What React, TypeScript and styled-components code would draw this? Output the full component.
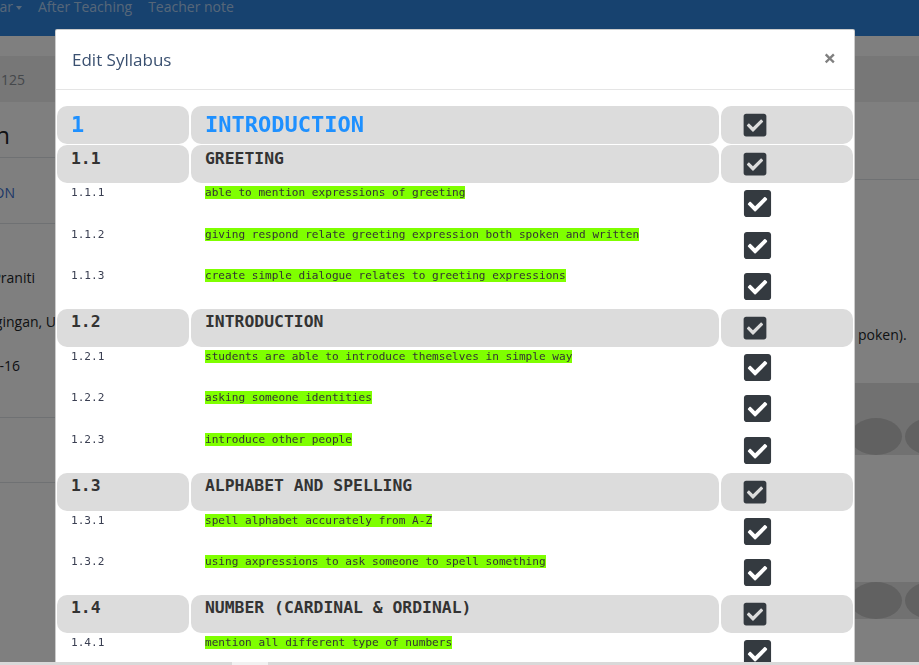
import React from 'react';
import styled, { createGlobalStyle, css } from 'styled-components';
import { FaCheckSquare } from 'react-icons/fa';

const GlobalStyle = createGlobalStyle`
  html, body { margin: 0; padding: 0; height: 100%; overflow: hidden; background: #fff; }
  body { font-family: "Open Sans", "Liberation Sans", sans-serif; color: #212529; }
  * { box-sizing: border-box; }
`;

/* ---------- background page ---------- */
const Page = styled.div`
  width: 100%;
  height: 665px;
  overflow: hidden;
  background: #fff;
`;

const NavBar = styled.nav`
  height: 36px;
  background: #2e84de;
  display: flex;
  align-items: flex-start;
`;

const NavClip = styled.div`
  width: 30px;
  flex-shrink: 0;
  overflow: hidden;
  display: flex;
  justify-content: flex-end;
`;

const NavLink = styled.span<{ $dropdown?: boolean }>`
  flex-shrink: 0;
  padding: 0 8px;
  font-size: 14px;
  line-height: 14px;
  color: rgba(255, 255, 255, 0.62);
  white-space: nowrap;
  ${(p) =>
    p.$dropdown &&
    css`
      &::after {
        content: '';
        display: inline-block;
        margin-left: 3px;
        vertical-align: 2px;
        border-top: 4px solid;
        border-left: 3.5px solid transparent;
        border-right: 3.5px solid transparent;
      }
    `}
`;

const Breadcrumb = styled.div`
  margin-top: 20px;
  height: 46px;
  background: #eee;
  display: flex;
  align-items: center;
`;

const Clip = styled.div<{ $w: number }>`
  width: ${(p) => p.$w}px;
  flex-shrink: 0;
  overflow: hidden;
  display: flex;
  justify-content: flex-end;
  white-space: nowrap;
`;

const Crumb = styled.span`
  font-size: 14px;
  color: #8a9096;
`;

const Columns = styled.div`
  display: flex;
`;

const LeftCol = styled.div`
  width: 56px;
  flex-shrink: 0;
  overflow: hidden;
`;

const MidCol = styled.div`
  flex: 1;
`;

const RightCol = styled.div`
  width: 68px;
  flex-shrink: 0;
  overflow: hidden;
`;

const TitleBlock = styled.div`
  height: 56px;
  border-bottom: 1px solid #dee2e6;
  display: flex;
  justify-content: flex-end;
  padding: 17px 46px 0 0;
  font-size: 24px;
  line-height: 32px;
  white-space: nowrap;
`;

const TabBlock = styled.div`
  height: 66px;
  border-bottom: 1px solid #dee2e6;
  display: flex;
  justify-content: flex-end;
  align-items: flex-start;
  white-space: nowrap;
`;

const TabText = styled.span`
  margin-top: 25px;
  margin-right: 41px;
  font-size: 14px;
  line-height: 20px;
  color: #3a6fd0;
`;

const TabBar = styled.span`
  margin-top: 22px;
  width: 1px;
  height: 25px;
  background: #573e8e;
`;

const InfoBlock = styled.div<{ $h: number }>`
  height: ${(p) => p.$h}px;
  border-bottom: 1px solid #dee2e6;
  padding-top: 43px;
  display: flex;
  flex-direction: column;
  gap: 23px;
`;

const InfoLine = styled.div<{ $end: number }>`
  display: flex;
  justify-content: flex-end;
  padding-right: ${(p) => p.$end}px;
  white-space: nowrap;
  font-size: 14px;
  line-height: 21px;
  height: 21px;
`;

const RightTop = styled.div`
  height: 78px;
  border-bottom: 1px solid #dee2e6;
`;

const RightText = styled.div`
  margin-top: 144px;
  padding-left: 7px;
  font-size: 14px;
  line-height: 21px;
  white-space: nowrap;
`;

const Band = styled.div<{ $top: number; $pad: number }>`
  margin-top: ${(p) => p.$top}px;
  background: #e2e2e2;
  padding-top: ${(p) => p.$pad}px;
`;

const EllipseRow = styled.div`
  display: flex;
  gap: 3px;
  margin-left: -1px;
`;

const Ellipse = styled.span`
  flex-shrink: 0;
  width: 52px;
  height: 37px;
  border-radius: 50%;
  background: #c2c2c2;
`;

/* ---------- overlay ---------- */
const Backdrop = styled.div`
  position: fixed;
  inset: 0;
  background: rgba(0, 0, 0, 0.5);
`;

const ModalLayer = styled.div`
  position: fixed;
  inset: 0;
  overflow: hidden;
  padding: 29px 0 0 55px;
`;

const Modal = styled.div`
  width: 800px;
  background: #fff;
  border: 1px solid rgba(0, 0, 0, 0.2);
  border-radius: 2px;
`;

const ModalHeader = styled.div`
  height: 60px;
  display: flex;
  align-items: center;
  justify-content: space-between;
  padding: 0 18px 0 16px;
  border-bottom: 1px solid #e5e5e5;
`;

const ModalTitle = styled.h5`
  margin: 0;
  font-size: 17px;
  font-weight: 400;
  color: #3a5070;
`;

const CloseButton = styled.button`
  border: 0;
  background: transparent;
  padding: 0 0 6px;
  font-family: "Open Sans", sans-serif;
  font-size: 22px;
  font-weight: 700;
  line-height: 1;
  color: #808080;
  cursor: pointer;
`;

const ModalBody = styled.div`
  padding: 16px 1px 0;
`;

type Kind = 'chapter' | 'topic' | 'item';

const Row = styled.div<{ $kind: Kind }>`
  display: grid;
  grid-template-columns: 132px 528px 132px;
  column-gap: 2px;
  height: ${(p) => (p.$kind === 'item' ? '40.6px' : '38px')};
  margin-bottom: 1px;
`;

const mono = `"DejaVu Sans Mono", "Liberation Mono", monospace`;

const HeadCell = styled.div<{ $chapter?: boolean }>`
  background: #dcdcdc;
  border-radius: 10px;
  padding: ${(p) => (p.$chapter ? '5px' : '2.5px')} 14px 0;
  font-family: ${mono};
  font-weight: 700;
  font-size: ${(p) => (p.$chapter ? '22px' : '16.4px')};
  line-height: ${(p) => (p.$chapter ? '28px' : '22px')};
  color: ${(p) => (p.$chapter ? '#1e90ff' : '#333')};
  white-space: nowrap;
`;

const ItemCell = styled.div`
  padding: 1px 14px 0;
  font-family: ${mono};
  font-size: 11.1px;
  line-height: 15px;
  color: #333;
  white-space: nowrap;
`;

const ItemNum = styled(ItemCell)`
  color: #3a3f52;
`;

const Mark = styled.span`
  background: #7fff00;
`;

const CheckCell = styled.div<{ $head?: boolean }>`
  background: ${(p) => (p.$head ? '#dcdcdc' : 'transparent')};
  border-radius: 10px;
  padding: ${(p) => (p.$head ? '6px' : '4px')} 0 0 21px;
  line-height: 0;
  color: #343a40;
`;

const HScroll = styled.div`
  position: fixed;
  left: 0;
  right: 0;
  bottom: 0;
  height: 3px;
  background: #d9d9d9;
  display: flex;
`;

const HThumb = styled.span`
  margin-left: 232px;
  width: 36px;
  background: #f1f1f1;
`;

/* ---------- data ---------- */
type Topic = { num: string; title: string; items: [string, string][] };

const topics: Topic[] = [
  {
    num: '1.1',
    title: 'GREETING',
    items: [
      ['1.1.1', 'able to mention expressions of greeting'],
      ['1.1.2', 'giving respond relate greeting expression both spoken and written'],
      ['1.1.3', 'create simple dialogue relates to greeting expressions'],
    ],
  },
  {
    num: '1.2',
    title: 'INTRODUCTION',
    items: [
      ['1.2.1', 'students are able to introduce themselves in simple way'],
      ['1.2.2', 'asking someone identities'],
      ['1.2.3', 'introduce other people'],
    ],
  },
  {
    num: '1.3',
    title: 'ALPHABET AND SPELLING',
    items: [
      ['1.3.1', 'spell alphabet accurately from A-Z'],
      ['1.3.2', 'using axpressions to ask someone to spell something'],
    ],
  },
  {
    num: '1.4',
    title: 'NUMBER (CARDINAL & ORDINAL)',
    items: [
      ['1.4.1', 'mention all different type of numbers'],
      ['1.4.2', 'read and write numbers correctly'],
    ],
  },
];

const Check: React.FC<{ head?: boolean }> = ({ head }) => (
  <CheckCell $head={head}>
    <FaCheckSquare size={head ? 26 : 31} />
  </CheckCell>
);

export default function App() {
  return (
    <>
      <GlobalStyle />
      <Page>
        <NavBar>
          <NavClip>
            <NavLink $dropdown>Calendar</NavLink>
          </NavClip>
          <NavLink>After Teaching</NavLink>
          <NavLink>Teacher note</NavLink>
        </NavBar>
        <Breadcrumb>
          <Clip $w={25}>
            <Crumb>Kelas 125</Crumb>
          </Clip>
        </Breadcrumb>
        <Columns>
          <LeftCol>
            <TitleBlock>Pertemuan</TitleBlock>
            <TabBlock>
              <TabText>INFORMATION</TabText>
              <TabBar />
            </TabBlock>
            <InfoBlock $h={194}>
              <InfoLine $end={21}>Guru: Wahyu Praniti</InfoLine>
              <InfoLine $end={0}>Lokasi: Kampus Ngingan, U</InfoLine>
              <InfoLine $end={36}>2019-09-16</InfoLine>
            </InfoBlock>
            <InfoBlock $h={65} />
          </LeftCol>
          <MidCol />
          <RightCol>
            <RightTop />
            <RightText>poken).</RightText>
            <Band $top={38} $pad={35}>
              <EllipseRow>
                <Ellipse />
                <Ellipse />
              </EllipseRow>
            </Band>
            <Band $top={127} $pad={0}>
              <EllipseRow>
                <Ellipse />
                <Ellipse />
              </EllipseRow>
            </Band>
          </RightCol>
        </Columns>
      </Page>

      <Backdrop />
      <ModalLayer>
        <Modal>
          <ModalHeader>
            <ModalTitle>Edit Syllabus</ModalTitle>
            <CloseButton aria-label="Close">×</CloseButton>
          </ModalHeader>
          <ModalBody>
            <Row $kind="chapter">
              <HeadCell $chapter>1</HeadCell>
              <HeadCell $chapter>INTRODUCTION</HeadCell>
              <Check head />
            </Row>
            {topics.map((t) => (
              <React.Fragment key={t.num}>
                <Row $kind="topic">
                  <HeadCell>{t.num}</HeadCell>
                  <HeadCell>{t.title}</HeadCell>
                  <Check head />
                </Row>
                {t.items.map(([n, text]) => (
                  <Row $kind="item" key={n}>
                    <ItemNum>{n}</ItemNum>
                    <ItemCell>
                      <Mark>{text}</Mark>
                    </ItemCell>
                    <Check />
                  </Row>
                ))}
              </React.Fragment>
            ))}
          </ModalBody>
        </Modal>
      </ModalLayer>
      <HScroll>
        <HThumb />
      </HScroll>
    </>
  );
}
